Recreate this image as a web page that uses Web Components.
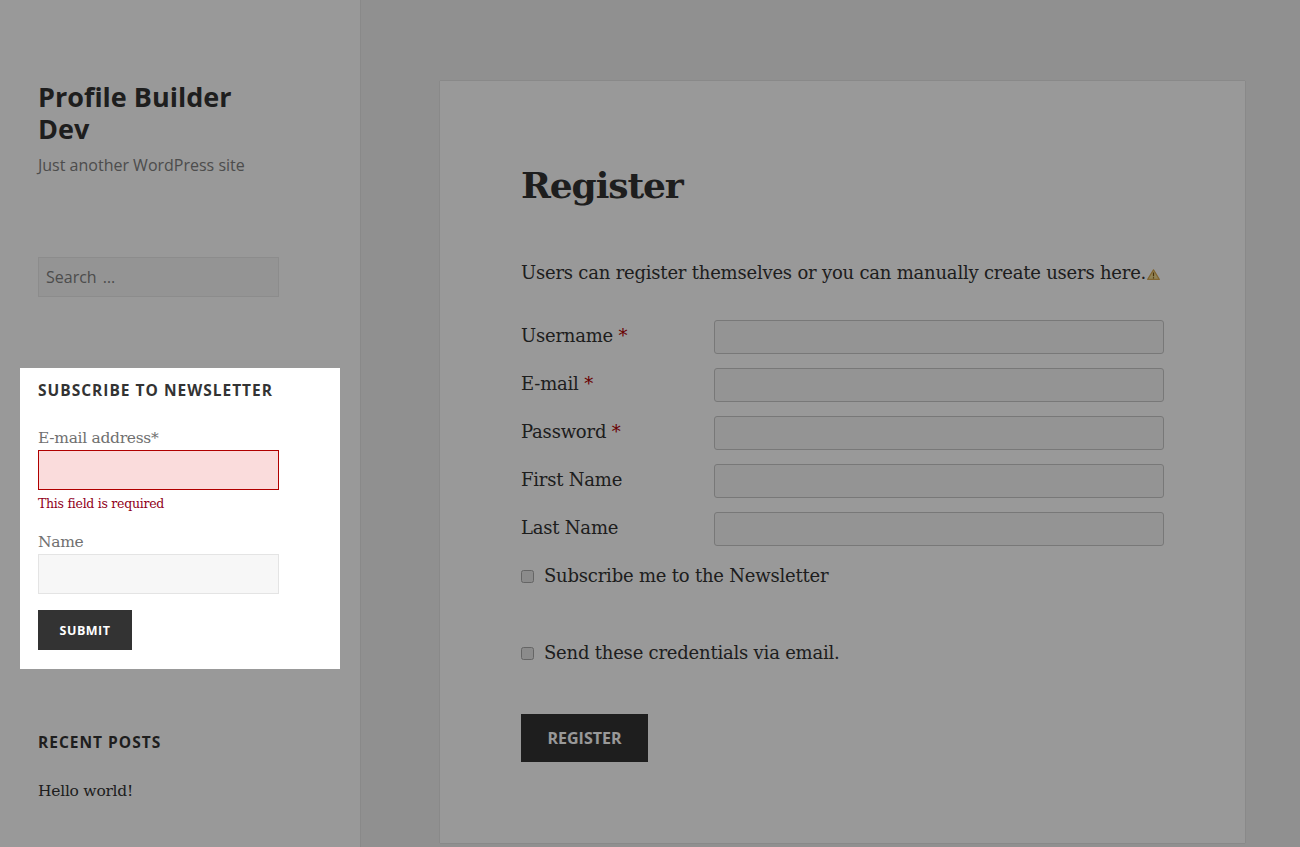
<!DOCTYPE html>
<html lang="en">
<head>
<meta charset="utf-8">
<title>Register</title>
<style>
  html, body { margin: 0; height: 847px; overflow: hidden; background: #f1f1f1; }
  body { font-family: "DejaVu Serif", serif; color: #333; }
</style>
</head>
<body>
<site-page>
  <site-sidebar slot="sidebar">
    <site-brand name="Profile Builder Dev" tagline="Just another WordPress site"></site-brand>
    <search-box placeholder="Search …"></search-box>
    <newsletter-widget></newsletter-widget>
    <recent-posts></recent-posts>
  </site-sidebar>
  <register-card slot="main"></register-card>
</site-page>

<script>
const SANS = '"Open Sans", "Noto Sans", sans-serif';
const SERIF = '"DejaVu Serif", serif';

class SitePage extends HTMLElement {
    constructor() {
        super();
        this.attachShadow({ mode: 'open' }).innerHTML = `
            <style>
                :host { display: grid; grid-template-columns: 360px 1fr; height: 847px; overflow: hidden; }
                .side { background: #fff; box-shadow: 0 0 1px rgba(0,0,0,.3); }
                .main { padding: 81px 55px 4px 80px; min-width: 0; }
                .overlay { position: fixed; inset: 0; background: rgba(0,0,0,.4); z-index: 1; }
            </style>
            <div class="side"><slot name="sidebar"></slot></div>
            <div class="main"><slot name="main"></slot></div>
            <div class="overlay"></div>
        `;
    }
}

class SiteSidebar extends HTMLElement {
    constructor() {
        super();
        this.attachShadow({ mode: 'open' }).innerHTML = `
            <style>
                :host { display: block; padding: 81px 81px 0 38px; }
            </style>
            <slot></slot>
        `;
    }
}

class SiteBrand extends HTMLElement {
    constructor() {
        super();
        this.attachShadow({ mode: 'open' }).innerHTML = `
            <style>
                :host { display: block; font-family: ${SANS}; }
                .title { font-size: 27px; font-weight: 700; line-height: 32px; color: #333; }
                .tag { font-size: 16px; line-height: 24px; color: #808080; margin-top: 8px; }
            </style>
            <div class="title">${this.getAttribute('name')}</div>
            <div class="tag">${this.getAttribute('tagline')}</div>
        `;
    }
}

class SearchBox extends HTMLElement {
    constructor() {
        super();
        this.attachShadow({ mode: 'open' }).innerHTML = `
            <style>
                :host { display: block; margin-top: 80px; }
                .box {
                    box-sizing: border-box; height: 40px; padding: 0 7px;
                    border: 1px solid #eaeaea; background: #f7f7f7;
                    font: 16px/38px ${SANS}; color: #808080; word-spacing: 2px;
                }
            </style>
            <div class="box" role="searchbox">${this.getAttribute('placeholder')}</div>
        `;
    }
}

class FieldBlock extends HTMLElement {
    constructor() {
        super();
        const error = this.getAttribute('error');
        this.attachShadow({ mode: 'open' }).innerHTML = `
            <style>
                :host { display: block; }
                label { display: block; font: 15.5px/24px ${SERIF}; letter-spacing: -.3px; color: #707070; height: 24px; }
                input {
                    display: block; box-sizing: border-box; width: 241px; height: 40px; margin: 0; padding: 0 7px;
                    border: 1px solid #e4e4e4; background: #f7f7f7; border-radius: 0; outline: 0;
                }
                :host([error]) input { border-color: #b00000; background: #fadcdc; }
                .err { font: 12.5px/18px ${SERIF}; letter-spacing: -.27px; color: #900020; margin-top: 5px; height: 18px; }
            </style>
            <label>${this.getAttribute('label')}</label>
            <input type="text">
            ${error ? `<div class="err">${error}</div>` : ''}
        `;
    }
}

class NewsletterWidget extends HTMLElement {
    constructor() {
        super();
        this.attachShadow({ mode: 'open' }).innerHTML = `
            <style>
                :host {
                    display: block; position: relative; z-index: 2; background: #fff;
                    width: 320px; height: 301px; box-sizing: border-box;
                    margin: 71px 0 0 -18px; padding: 11px 18px 0;
                }
                h2 { margin: 0 0 25px; font: 700 15.5px/22px ${SANS}; letter-spacing: 1px; color: #333; text-transform: uppercase; }
                field-block + field-block { margin-top: 17px; }
                button {
                    display: block; margin-top: 16px; width: 94px; height: 40px; padding: 0; border: 0; border-radius: 0;
                    background: #333; color: #fff; font: 700 12.5px/42px ${SANS}; letter-spacing: .5px; text-transform: uppercase;
                }
            </style>
            <h2>Subscribe to Newsletter</h2>
            <field-block label="E-mail address*" error="This field is required"></field-block>
            <field-block label="Name"></field-block>
            <button type="button">Submit</button>
        `;
    }
}

class RecentPosts extends HTMLElement {
    constructor() {
        super();
        this.attachShadow({ mode: 'open' }).innerHTML = `
            <style>
                :host { display: block; margin-top: 62px; }
                h2 { margin: 0 0 26px; font: 700 15.5px/22px ${SANS}; letter-spacing: 1px; color: #333; text-transform: uppercase; }
                a { display: block; font: 15.5px/24px ${SERIF}; letter-spacing: -.25px; color: #333; text-decoration: none; }
            </style>
            <h2>Recent Posts</h2>
            <a href="#">Hello world!</a>
        `;
    }
}

class FormRow extends HTMLElement {
    constructor() {
        super();
        const required = this.hasAttribute('required');
        this.attachShadow({ mode: 'open' }).innerHTML = `
            <style>
                :host { display: grid; grid-template-columns: 193px 450px; height: 34px; margin-bottom: 14px; align-items: start; }
                label { font: 18px/32px ${SERIF}; letter-spacing: -.21px; color: #333; }
                i { font-style: normal; color: #b00000; }
                input { box-sizing: border-box; width: 450px; height: 34px; margin: 0; border: 1px solid #c8c8c8; border-radius: 3px; background: #f7f7f7; outline: 0; }
            </style>
            <label>${this.getAttribute('label')}${required ? ' <i>*</i>' : ''}</label>
            <input type="text">
        `;
    }
}

class CheckRow extends HTMLElement {
    constructor() {
        super();
        this.attachShadow({ mode: 'open' }).innerHTML = `
            <style>
                :host { display: flex; align-items: center; height: 30px; font: 18px/30px ${SERIF}; letter-spacing: -.21px; color: #333; }
                span.box {
                    box-sizing: border-box; flex: none; width: 13px; height: 13px; margin-right: 10px;
                    border: 1px solid #a8a8a8; border-radius: 2.5px; background: #e8e8e8;
                }
            </style>
            <span class="box"></span><span>${this.getAttribute('label')}</span>
        `;
    }
}

class RegisterCard extends HTMLElement {
    constructor() {
        super();
        this.attachShadow({ mode: 'open' }).innerHTML = `
            <style>
                :host { display: block; box-sizing: border-box; height: 762px; padding: 77px 81px 0; background: #fff; box-shadow: 0 0 1px rgba(0,0,0,.3); }
                h1 { margin: 0; font: 700 36px/54px ${SERIF}; letter-spacing: -1.1px; color: #333; }
                p { margin: 46px 0 32px; font: 18px/30px ${SERIF}; letter-spacing: -.21px; color: #333; white-space: nowrap; }
                p svg { vertical-align: -1px; margin-left: 1px; }
                .c1 { margin-top: 15px; }
                .c2 { margin-top: 47px; }
                button {
                    display: block; margin-top: 46px; width: 127px; height: 48px; padding: 0; border: 0; border-radius: 0;
                    background: #333; color: #fff; font: 700 16px/48px ${SANS}; text-transform: uppercase;
                }
            </style>
            <h1>Register</h1>
            <p>Users can register themselves or you can manually create users here.<svg width="13" height="11" viewBox="0 0 13 11"><path d="M6.5 .8 12.3 10.4H.7Z" fill="#f2dc90" stroke="#d8a850" stroke-width="1.2" stroke-linejoin="round"/><path d="M6.5 3.6v3.6M6.5 8.2v1.2" stroke="#7a5010" stroke-width="1.2"/></svg></p>
            <form-row label="Username" required></form-row>
            <form-row label="E-mail" required></form-row>
            <form-row label="Password" required></form-row>
            <form-row label="First Name"></form-row>
            <form-row label="Last Name"></form-row>
            <check-row class="c1" label="Subscribe me to the Newsletter"></check-row>
            <check-row class="c2" label="Send these credentials via email."></check-row>
            <button type="button">Register</button>
        `;
    }
}

customElements.define('site-page', SitePage);
customElements.define('site-sidebar', SiteSidebar);
customElements.define('site-brand', SiteBrand);
customElements.define('search-box', SearchBox);
customElements.define('field-block', FieldBlock);
customElements.define('newsletter-widget', NewsletterWidget);
customElements.define('recent-posts', RecentPosts);
customElements.define('form-row', FormRow);
customElements.define('check-row', CheckRow);
customElements.define('register-card', RegisterCard);
</script>
</body>
</html>
